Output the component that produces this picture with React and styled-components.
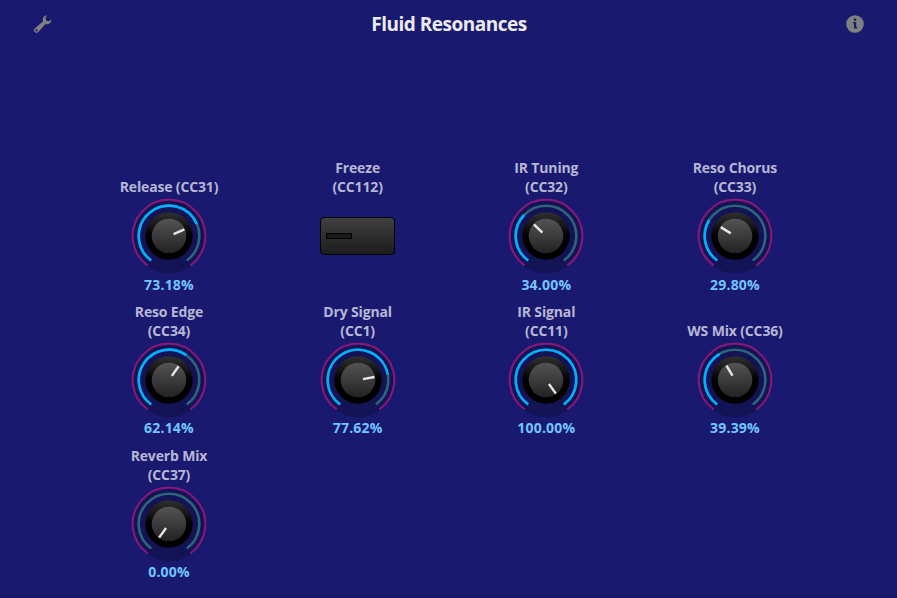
import React from "react";
import styled, { createGlobalStyle } from "styled-components";

const GlobalStyle = createGlobalStyle`
  *, *::before, *::after { box-sizing: border-box; }
  body { margin: 0; background: #19196f; }
`;

const Panel = styled.main`
  display: flex;
  flex-direction: column;
  width: 897px;
  height: 598px;
  overflow: hidden;
  background: #19196f;
  border-bottom: 3px solid #18186b;
  font-family: "Open Sans", "Noto Sans", sans-serif;
  font-weight: 700;
`;

const Header = styled.header`
  display: flex;
  align-items: center;
  justify-content: space-between;
  height: 47px;
  padding: 0 33px 0 34px;
  color: #808080;
`;

const Icon = styled.svg`
  display: block;
  width: 18px;
  height: 18px;
`;

const Title = styled.h1`
  margin: 0;
  padding-top: 1px;
  color: #ebebeb;
  font-size: 19px;
  line-height: 26px;
  letter-spacing: -0.5px;
`;

const Controls = styled.section`
  display: grid;
  grid-template-columns: repeat(4, 188.67px);
  grid-auto-rows: 143.8px;
  margin: 111px 0 0 74.67px;
`;

const Control = styled.div`
  display: flex;
  flex-direction: column;
  align-items: center;
`;

const Label = styled.div`
  display: flex;
  flex-direction: column;
  justify-content: flex-end;
  align-items: center;
  height: 38px;
  margin-bottom: 2px;
  color: #b7b7d5;
  font-size: 14px;
  line-height: 19px;
  letter-spacing: -0.15px;
  white-space: nowrap;
`;

const Dial = styled.svg`
  display: block;
  width: 76px;
  height: 76px;
  flex: none;
`;

const Value = styled.div`
  margin-top: 0.5px;
  color: #73c5ff;
  font-size: 14px;
  line-height: 19px;
  letter-spacing: 0.2px;
`;

const Toggle = styled.button`
  display: flex;
  align-items: center;
  width: 75px;
  height: 38px;
  margin: 19px 0 0;
  padding: 0 0 0 5px;
  border: 1px solid #000;
  border-radius: 4px;
  background: linear-gradient(#404040, #1c1c1c);
`;

const Lamp = styled.span`
  width: 26px;
  height: 6px;
  border: 1px solid #000;
  background: #1a1a1a;
`;

const SWEEP = 144;
const CENTER = 38;

const polar = (radius, degrees) => {
  const a = (degrees * Math.PI) / 180;
  return [CENTER + radius * Math.sin(a), CENTER - radius * Math.cos(a)];
};

const arc = (radius, from, to) => {
  const large = to - from > 180 ? 1 : 0;
  return `M${polar(radius, from)} A${radius} ${radius} 0 ${large} 1 ${polar(radius, to)}`;
};

function Knob({ value }) {
  const angle = -SWEEP + (value / 100) * SWEEP * 2;
  const [x1, y1] = polar(5, angle);
  const [x2, y2] = polar(16.8, angle);
  return (
    <Dial viewBox="0 0 76 76" fill="none">
      <defs>
        <linearGradient id="rim" x1="0" y1="0" x2="0" y2="1">
          <stop offset="0" stopColor="#303030" />
          <stop offset="0.5" stopColor="#000" />
        </linearGradient>
        <linearGradient id="cap" x1="0" y1="0" x2="0" y2="1">
          <stop offset="0" stopColor="#545454" />
          <stop offset="1" stopColor="#222" />
        </linearGradient>
      </defs>
      <circle cx={CENTER} cy={CENTER} r="37.3" fill="#131356" />
      <path d={arc(36.3, -SWEEP, SWEEP)} stroke="#82187a" strokeWidth="2.2" />
      <path d={arc(30.3, -SWEEP, SWEEP)} stroke="#2d657c" strokeWidth="2.6" />
      {value > 0 && <path d={arc(30.3, -SWEEP, angle)} stroke="#00b0ff" strokeWidth="2.6" />}
      <circle cx={CENTER} cy={CENTER} r="23.7" fill="url(#rim)" />
      <circle cx={CENTER} cy={CENTER} r="17.3" fill="url(#cap)" />
      <path d={`M${x1} ${y1}L${x2} ${y2}`} stroke="#e6e6e6" strokeWidth="2.4" />
    </Dial>
  );
}

function WrenchIcon() {
  return (
    <Icon viewBox="0 0 18 18" fill="currentColor">
      <path
        fillRule="evenodd"
        d="M12.9 0.3C9.8 0.6 8.2 3.2 9 6.3L0.9 13.4A2.5 2.5 0 1 0 4.3 17.1L11.6 9C14.4 9.8 17.2 8.1 17.5 4.5L14.8 6.2L12.1 5.6L11.6 3.1ZM2.6 14.3A1.1 1.1 0 1 1 2.6 16.5A1.1 1.1 0 1 1 2.6 14.3Z"
      />
    </Icon>
  );
}

function InfoIcon() {
  return (
    <Icon viewBox="0 0 18 18">
      <circle cx="9" cy="9" r="8.8" fill="currentColor" />
      <path
        fill="#19196f"
        d="M7.9 3.6H10.2V5.8H7.9ZM7 7.1H10.2V12.2H11.2V13.4H7.9V8.3H7Z"
      />
    </Icon>
  );
}

const controls = [
  { label: ["Release (CC31)"], value: 73.18 },
  { label: ["Freeze", "(CC112)"], toggle: true },
  { label: ["IR Tuning", "(CC32)"], value: 34 },
  { label: ["Reso Chorus", "(CC33)"], value: 29.8 },
  { label: ["Reso Edge", "(CC34)"], value: 62.14 },
  { label: ["Dry Signal", "(CC1)"], value: 77.62 },
  { label: ["IR Signal", "(CC11)"], value: 100 },
  { label: ["WS Mix (CC36)"], value: 39.39 },
  { label: ["Reverb Mix", "(CC37)"], value: 0 },
];

export default function App() {
  return (
    <>
      <GlobalStyle />
      <Panel>
        <Header>
          <WrenchIcon />
          <Title>Fluid Resonances</Title>
          <InfoIcon />
        </Header>
        <Controls>
          {controls.map((c) => (
            <Control key={c.label.join(" ")}>
              <Label>
                {c.label.map((line) => (
                  <span key={line}>{line}</span>
                ))}
              </Label>
              {c.toggle ? (
                <Toggle aria-label="Freeze"><Lamp /></Toggle>
              ) : (
                <>
                  <Knob value={c.value} />
                  <Value>{c.value.toFixed(2)}%</Value>
                </>
              )}
            </Control>
          ))}
        </Controls>
      </Panel>
    </>
  );
}
